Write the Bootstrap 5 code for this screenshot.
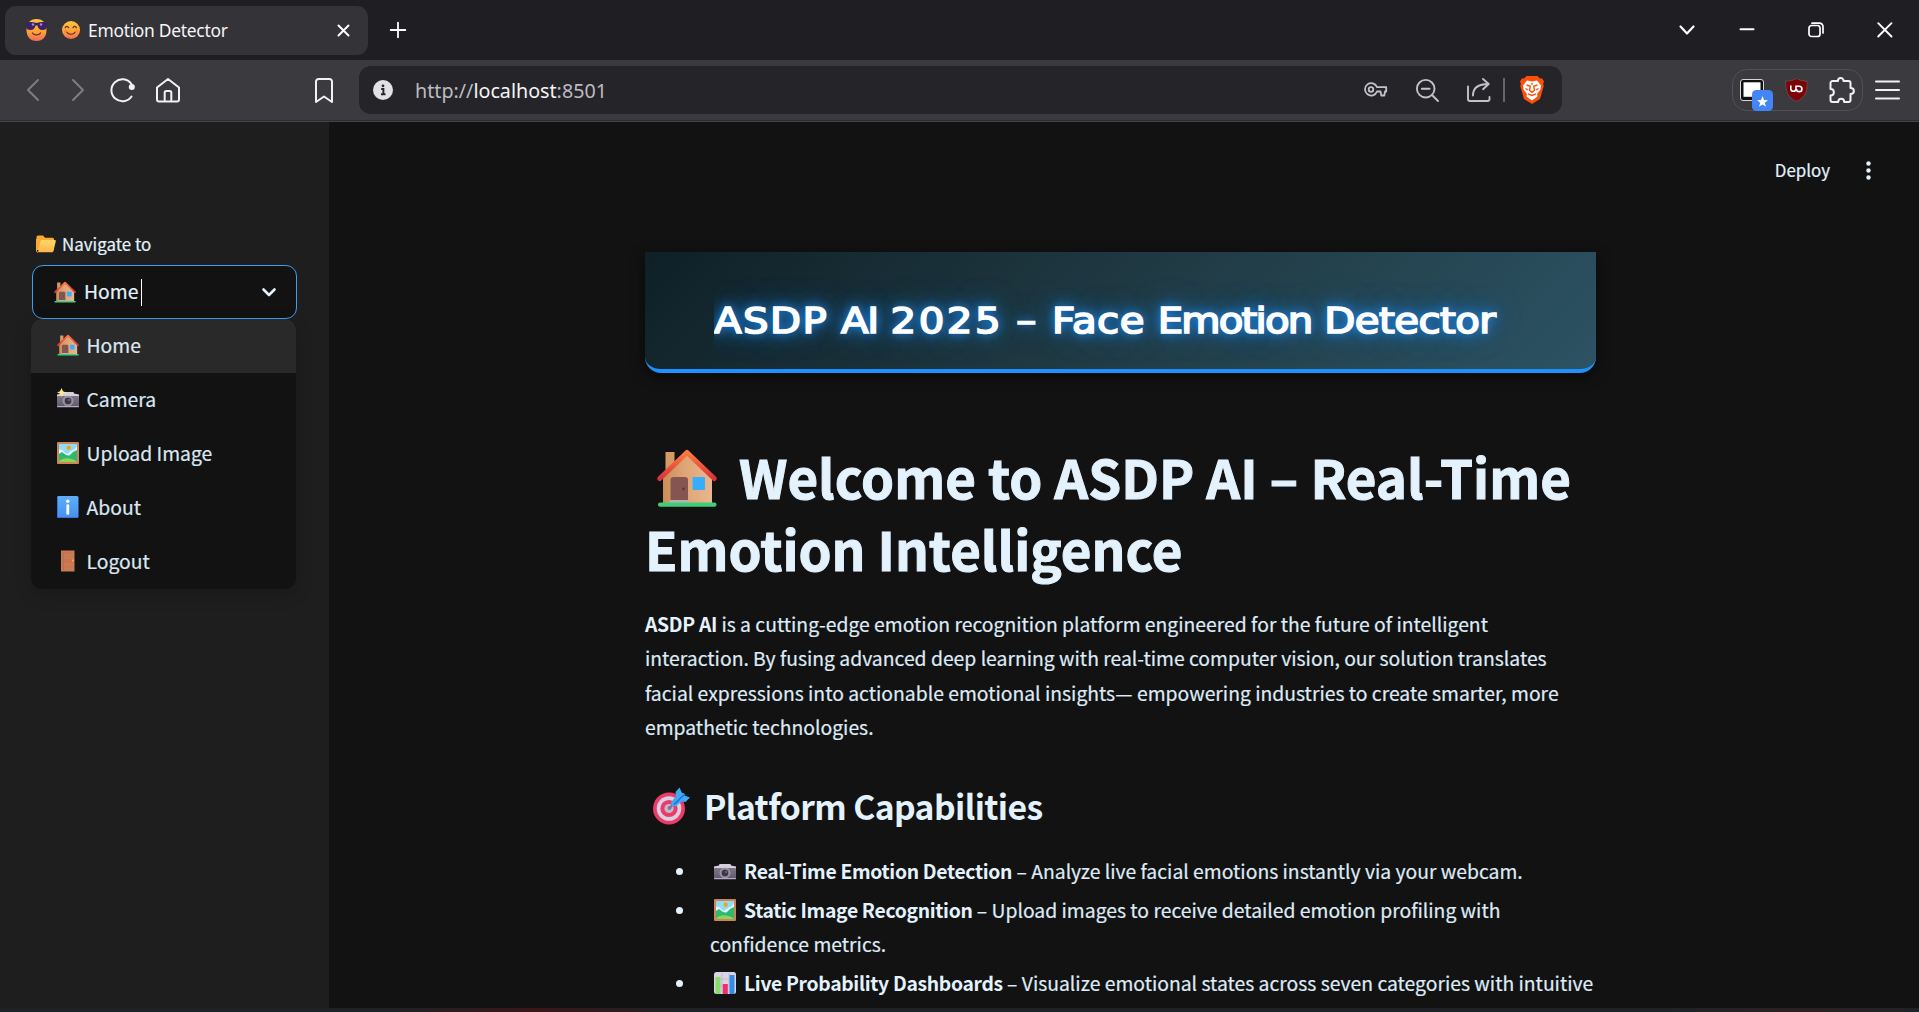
<!DOCTYPE html>
<html lang="en">
<head>
<meta charset="utf-8">
<title>😊 Emotion Detector</title>
<link href="https://cdn.jsdelivr.net/npm/bootstrap@5.3.0/dist/css/bootstrap.min.css" rel="stylesheet">
<style>
  body { background: #121212; color: #e3f2fd; font-family: "Noto Sans CJK SC", "Noto Sans", sans-serif; font-size: 19.34px; height: 1012px; overflow: hidden; }
  svg { flex: none; display: inline-block; overflow: visible; }
  .ln { fill: none; stroke: currentColor; stroke-linecap: round; stroke-linejoin: round; }
  .ui-font { font-family: "Noto Sans", "Open Sans", sans-serif; }

  .tabstrip { height: 60px; background: #1f1e23; color: #fff; padding: 0 26px 0 5px; }
  .tab-item { width: 363px; height: 49px; border-radius: 11px; background: #343338; padding: 0 18px 0 21px; }
  .tab-face { margin-left: 15px; }
  .tab-title { font-size: 17.4px; letter-spacing: -.27px; line-height: 24px; color: #f5f5f7; margin-left: 8px; padding-bottom: 1px; }
  .win-controls { gap: 53px; }
  .tab-search { margin-right: -9px; }
  .toolbar { height: 62px; background: #3b3a3f; border-bottom: 1px solid #45444a; box-shadow: inset 0 -1px #2c2b30; color: #f2f2f4; padding: 0 19px 1px 27px; }
  .nav-off { color: #7f7e84; }
  .nav-fwd { margin-left: 33px; }
  .nav-reload { margin-left: 26px; }
  .nav-home { margin-left: 21px; }
  .nav-mark { margin-left: 135px; }
  .url-box { width: 1203px; height: 48px; margin-left: 26px; border-radius: 12px; background: #252429; padding: 0 18px 0 14px; color: #c3c2c8; }
  .url-text { font-size: 19.7px; margin-left: 22px; padding-top: 1px; white-space: nowrap; color: #bcbbc2; }
  .url-text b { font-weight: 400; color: #f4f4f6; }
  .url-gap { margin-left: 28px; }
  .url-sep { width: 2px; height: 24px; background: #66656b; margin: 0 15px 0 13px; }
  .ext-box { width: 131px; height: 42px; border: 1.5px solid #525157; border-radius: 15px; margin: 0 12px 1px auto; padding: 0 7px; }
  .ext-pin { left: 12px; top: 11px; }
  .ext-shield { margin-left: 21px; }
  .ext-puzzle { margin-left: 21px; }

  .app-body { height: 886px; }
  .app-side { width: 329px; background: #1e1e1e; padding: 109px 32px 0 32px; }
  .side-label { font-size: 16.9px; height: 27px; padding: 0 0 2px 4px; gap: 6px; margin-bottom: 7px; }
  .pick { width: 265px; height: 54px; border: 1px solid #3d9df3; border-radius: 11px; background: #121212; padding: 0 20px 0 21px; }
  .pick-text { margin-left: 8px; }
  .caret { width: 1px; height: 27px; background: #fff; margin-left: 3px; }
  .pick-menu { width: 265px; margin-left: -1px; background: #121212; border-radius: 11px; overflow: hidden; box-shadow: 0 5px 18px rgba(0,0,0,.18); color: #dbe8f3; }
  .pick-menu > div { height: 54px; padding: 0 25px 0 26px; }
  .pick-menu > .sel { background: #292929; }
  .pick-menu svg { margin-bottom: 2px; }
  .pick-menu span { margin-left: 7.5px; }
  .app-side span, .body-text, .caps, .deploy span { -webkit-text-stroke: .2px currentColor; }

  .app-main { background: #121212; overflow: hidden; }
  .deploy { height: 130px; padding: 36px 45px 0 0; font-size: 16.9px; line-height: 24px; gap: 33px; }
  .deploy svg { margin-top: 2px; }
  .content { width: 951px; margin-left: 316px; }
  .hero { height: 121px; border-bottom: 4px solid #1e90ff; border-radius: 0 0 16px 16px; background: linear-gradient(135deg, #0f2027, #203a43 50%, #2c5364); box-shadow: 0 4px 14px rgba(0,0,0,.55); padding: 41px 0 0 69px; }
  .hero-title { font: 400 35.6px/56px "DejaVu Sans", sans-serif; color: #fff; white-space: nowrap; display: inline-block; transform: scaleX(1.132); transform-origin: 0 0; -webkit-text-stroke: 1.7px #fff; text-shadow: 0 0 9px #1e90ff, 0 0 16px #1e80e0, 0 0 26px #1e6cb8; clip-path: inset(-30px -40px -30px 0); }
  .w1 { letter-spacing: 1.3px; } .w2 { letter-spacing: -1.3px; } .w3 { letter-spacing: 2.3px; } .w4 { letter-spacing: 2.6px; }
  .w5 { letter-spacing: .4px; } .w6 { letter-spacing: -1.6px; } .w7 { letter-spacing: -.5px; }
  .big-title { font-size: 52.9px; font-weight: 700; line-height: 72px; margin: 67px 0 23px; white-space: nowrap; -webkit-text-stroke: 1px currentColor; }
  .big-title svg { margin: 0 22px 0 12px; vertical-align: -8px; }
  .body-text { line-height: 34.4px; margin-bottom: 40.8px; white-space: nowrap; color: #dfebf6; }
  .body-text b, .caps b { letter-spacing: -.32px; color: #e3f2fd; -webkit-text-stroke: 0; }
  .sub-title { font-size: 33.7px; font-weight: 700; letter-spacing: -.6px; line-height: 42px; margin-bottom: 26.6px; white-space: nowrap; }
  .sub-title svg { margin: 0 14px 0 7px; vertical-align: -5px; }
  .caps { line-height: 34.4px; padding-left: 65px; white-space: nowrap; color: #dfebf6; }
  .caps li { position: relative; margin-bottom: 4.6px; }
  .caps li::before { content: ""; position: absolute; left: -34px; top: 14px; width: 7px; height: 7px; border-radius: 50%; background: #e3f2fd; }
  .caps svg { margin: 0 8px 0 4px; vertical-align: -3px; }
  .desk-edge { height: 4px; background: radial-gradient(ellipse 150px 12px at 535px 3px, #3b1618, transparent), radial-gradient(ellipse 130px 12px at 1800px 3px, #2e2024, transparent), #1f2328; }
</style>
</head>
<body class="d-flex flex-column">

<svg width="0" height="0" class="position-absolute">
  <defs>
    <linearGradient id="gWall" x1="0" x2="1"><stop offset="0" stop-color="#c98e58"/><stop offset=".45" stop-color="#dfa577"/><stop offset="1" stop-color="#e8b78f"/></linearGradient>
    <linearGradient id="gRoof" x1="0" y1="0" x2="0" y2="1"><stop offset="0" stop-color="#ff7b3d"/><stop offset="1" stop-color="#d9333c"/></linearGradient>
    <linearGradient id="gFace" x1="0" y1="0" x2="0" y2="1"><stop offset="0" stop-color="#ffc53a"/><stop offset=".6" stop-color="#ffa033"/><stop offset="1" stop-color="#f4685a"/></linearGradient>
    <linearGradient id="gCam" x1="0" y1="0" x2="0" y2="1"><stop offset="0" stop-color="#7d7686"/><stop offset="1" stop-color="#605b6b"/></linearGradient>
    <linearGradient id="gFold" x1="0" y1="0" x2="0" y2="1"><stop offset="0" stop-color="#ffd866"/><stop offset="1" stop-color="#fdb54e"/></linearGradient>
    <linearGradient id="gInfo" x1="0" y1="0" x2="0" y2="1"><stop offset="0" stop-color="#5eaefc"/><stop offset="1" stop-color="#4590ee"/></linearGradient>
    <symbol id="house" viewBox="0 0 60 58">
      <path d="M8.500 3h9v18l-9 8z" fill="#d69a63"/>
      <path d="M6 54V27L30 6l25 21v27z" fill="url(#gWall)"/>
      <path d="M2.800 29.500 30 3.500l27.200 26" fill="none" stroke="url(#gRoof)" stroke-width="5" stroke-linecap="round" stroke-linejoin="round"/>
      <path d="M13.500 53V31a3 3 0 0 1 3-3H28a3 3 0 0 1 3 3v22z" fill="#84564f"/>
      <circle cx="26.500" cy="40" r="1.400" fill="#5d3a3a"/>
      <path d="M13 51h19l1 3H12z" fill="#b9b0b5"/>
      <rect x="35.500" y="28" width="12.500" height="13" rx="1" fill="#38aefb"/>
      <rect x="1" y="53.500" width="58.500" height="4.200" rx="2" fill="#3fce78"/>
    </symbol>
    <symbol id="camera" viewBox="0 0 22 22">
      <path d="M0 6.500 5 5.500 5.500 4h11l.5 1.500 5 1V9H0z" fill="#d6d0dd"/>
      <rect x="0" y="8" width="22" height="11" rx="1" fill="url(#gCam)"/>
      <rect x="0" y="18" width="22" height="1.300" rx=".6" fill="#b9a6cf"/>
      <circle cx="11" cy="13" r="5" fill="#8b8496" stroke="#aaa3b3" stroke-width=".8"/>
      <circle cx="11" cy="13" r="3.200" fill="#3c3547"/><circle cx="12" cy="12" r="1" fill="#75708a"/>
    </symbol>
    <symbol id="camflash" viewBox="0 0 22 22">
      <use href="#camera" width="22" height="22"/>
      <path d="M4.500 0 6 3.200 9 4.500 6 5.800 4.500 9 3 5.800 0 4.500 3 3.200z" fill="#ffe58a"/>
    </symbol>
    <symbol id="picture" viewBox="0 0 22 22">
      <rect width="22" height="22" rx="1" fill="#cf8455"/>
      <rect x="2" y="2" width="18" height="18" fill="#8fdcf8"/>
      <path d="M2 8c2-1 4 0 5 2l3 2 4-3 4-2 2-3v9H2z" fill="#e6f4fb"/>
      <circle cx="11.700" cy="5.800" r="2.200" fill="#f7a11b"/>
      <path d="M2 12l3-2 4 3 3 1 4-4 4-2v12H2z" fill="#2fb970"/>
      <path d="M2 20c2-5 13-5 18 0z" fill="#8ad65a"/>
    </symbol>
    <symbol id="info" viewBox="0 0 22 22">
      <rect width="21.500" height="22" rx="1.500" fill="url(#gInfo)"/><path d="M.5 2v19.500H21" fill="none" stroke="#3f6fd8"/>
      <circle cx="10.800" cy="5.200" r="1.700" fill="#fff"/><rect x="9.400" y="8.300" width="2.800" height="10.500" rx="1.200" fill="#fff"/>
    </symbol>
    <symbol id="door" viewBox="0 0 22 22">
      <rect x="4" y=".5" width="13.500" height="21" fill="#c67c57"/>
      <path d="M6.500 3h8.500M6.500 10h8.500M6.500 12h8.500M6.500 17h8.500" stroke="#d9694a" stroke-width="1.200"/>
      <path d="M6.200 2.500v18" stroke="#b06a4a" stroke-width=".8"/><circle cx="16" cy="10.500" r="1.100" fill="#f6b02e"/>
    </symbol>
    <symbol id="folder" viewBox="0 0 20 18">
      <path d="M.5 2a1.500 1.500 0 0 1 1.500-1.500h5l2 2.300h7.500A1.500 1.500 0 0 1 18 4.300V15H.5z" fill="#f5ab35"/>
      <path d="M4.500 6.200A1.500 1.500 0 0 1 6 5h12.800c.7 0 1.200.6 1 1.300l-2.300 9.800a1.500 1.500 0 0 1-1.500 1.200H2z" fill="url(#gFold)"/>
      <path d="M.5 4v12c0 .8.800 1.400 1.500 1.400" stroke="#f5ab35" fill="none"/>
    </symbol>
    <symbol id="target" viewBox="0 0 38 38">
      <circle cx="17" cy="21.500" r="16" fill="#ee3a68"/><circle cx="17" cy="21.500" r="12.300" fill="#d9cfe2"/>
      <circle cx="17" cy="21.500" r="8.600" fill="#ee3a68"/><circle cx="17" cy="21.500" r="4.600" fill="#c3b9cf"/><circle cx="17.500" cy="21" r="2" fill="#837a94"/>
      <path d="M17.500 21 28 10" stroke="#6d7891" stroke-width="2"/>
      <path d="M19 15.500 24 9l-.5-4L27.500.5 30 6l2 .2.500 2.300 5.500 2-4.500 4.500-3.700-.5-5.800 4.500-4 .5z" fill="#3ea9f2"/>
      <path d="M22 17.500 33 7" stroke="#1f6fd6" stroke-width="1.600"/>
    </symbol>
    <symbol id="chart" viewBox="0 0 22 22">
      <rect width="22" height="22" rx="2.500" fill="#dcd3e4"/>
      <path d="M1 7h20M1 14h20M8 1v20M15 1v20" stroke="#bcb2c6" stroke-width=".7"/>
      <rect x="1.500" y="5" width="5" height="17" fill="#86dd6c"/><rect x="8.800" y="12" width="5" height="10" fill="#f02e6c"/><rect x="15.500" y="3" width="5" height="19" fill="#2f8fe8"/>
    </symbol>
    <symbol id="smile" viewBox="0 0 18 18">
      <circle cx="9" cy="9" r="9" fill="url(#gFace)"/>
      <path d="M3.200 6.800c.6-1.800 2.800-1.800 3.400 0M11 6.800c.6-1.800 2.800-1.800 3.400 0M4.800 11c1.500 3 7 3 8.400 0" fill="none" stroke="#5b3035" stroke-width="1.200" stroke-linecap="round"/>
      <circle cx="3.500" cy="10" r="1.500" fill="#ff7a45" opacity=".7"/><circle cx="14.500" cy="10" r="1.500" fill="#ff7a45" opacity=".7"/>
    </symbol>
    <symbol id="cool" viewBox="0 0 21 22">
      <path d="M10.500 0C17 0 20.500 4.500 20.500 11s-3.500 11-10 11S.5 17.500.5 11 4 0 10.500 0z" fill="url(#gFace)"/>
      <path d="M0 3.500c3-1 7-.7 10.500.5C14 2.800 18 2.500 21 3.500v3c0 3-1.500 4.500-4.500 4.500S12 9 11.500 6.500h-2C9 9 7.500 11 4.500 11S0 9.500 0 6.500z" fill="#3a2169"/>
      <circle cx="7" cy="5.500" r="1.200" fill="#a78bdf"/><circle cx="15" cy="5.500" r="1.200" fill="#a78bdf"/>
      <path d="M6.500 14c1.500 2.500 6.500 2.500 8 0" fill="none" stroke="#5b3035" stroke-width="1.400" stroke-linecap="round"/>
    </symbol>
  </defs>
</svg>

<header class="ui-font">
  <div class="tabstrip d-flex align-items-center">
    <div class="tab-item d-flex align-items-center">
      <svg width="21" height="22"><use href="#cool"/></svg>
      <svg class="tab-face" width="18" height="18"><use href="#smile"/></svg>
      <span class="tab-title">Emotion Detector</span>
      <svg class="ln ms-auto" width="13" height="13" viewBox="0 0 13 13" stroke-width="2"><path d="m1.500 1.500 10 10m0-10-10 10"/></svg>
    </div>
    <svg class="ln ms-4" width="14" height="16" viewBox="1 0 14 16" stroke-width="1.800"><path d="M7 .7v14.600M-.3 8h14.600"/></svg>
    <div class="win-controls d-flex align-items-center ms-auto">
      <svg class="ln tab-search" width="16" height="16" viewBox="0 0 16 16" stroke-width="2.200"><path d="m1.500 4.500 6.500 7 6.500-7"/></svg>
      <svg class="ln" width="16" height="16" viewBox="0 0 16 16" stroke-width="2"><path d="M1.500 7.200h13"/></svg>
      <svg class="ln" width="16" height="16" viewBox="0 0 16 16" stroke-width="1.700"><rect x="1" y="3.500" width="11" height="11" rx="2.500"/><path d="M4 1.200h7.500a3.500 3.500 0 0 1 3.500 3.500V11"/></svg>
      <svg class="ln" width="16" height="16" viewBox="0 0 16 16" stroke-width="1.900"><path d="m1.200 1.200 13.300 13.300m0-13.300L1.200 14.500"/></svg>
    </div>
  </div>

  <div class="toolbar d-flex align-items-center">
    <svg class="ln nav-off" width="12" height="22" viewBox="0 0 12 22" stroke-width="1.900"><path d="M11 1 1 11l10 10"/></svg>
    <svg class="ln nav-off nav-fwd" width="12" height="22" viewBox="0 0 12 22" stroke-width="1.900"><path d="m1 1 10 10L1 21"/></svg>
    <svg class="ln nav-reload" width="25" height="24" viewBox="0 0 25 24" stroke-width="2"><path d="M21.500 18.500A11 11 0 1 1 21.300 5.800"/><circle cx="21.800" cy="9" r="2.300" fill="currentColor" stroke-width="1.500"/></svg>
    <svg class="ln nav-home" width="24" height="25" viewBox="0 0 24 25" stroke-width="2"><path d="M1 9.500 12 1l11 8.500v12a2 2 0 0 1-2 2H3a2 2 0 0 1-2-2zM8.700 23v-8.500a1.500 1.500 0 0 1 1.500-1.500h3.600a1.500 1.500 0 0 1 1.500 1.500V23"/></svg>
    <svg class="ln nav-mark" width="18" height="25" viewBox="0 0 18 25" stroke-width="2"><path d="M1 3.500A2.500 2.500 0 0 1 3.500 1h11A2.500 2.500 0 0 1 17 3.500V24l-8-5.500L1 24z"/></svg>

    <div class="url-box d-flex align-items-center">
      <svg width="20" height="20" viewBox="0 0 20 20"><circle cx="10" cy="10" r="10" fill="#e2e1e6"/><circle cx="10" cy="5.800" r="1.400" fill="#252429"/><path d="M8.200 9h2.200v5.300M8 14.300h4.500" stroke="#252429" stroke-width="1.900" fill="none"/></svg>
      <span class="url-text">http://<b>localhost</b>:8501</span>
      <svg class="ln ms-auto" width="24" height="16" viewBox="0 0 24 16" stroke-width="1.800"><path d="M13 5.200h9.200v4.300h-1.200l-.7 4h-3l-.8-4H13a6.200 6.200 0 1 1 0-4.300z"/><circle cx="7" cy="7.500" r="2.300"/></svg>
      <svg class="ln url-gap" width="23" height="23" viewBox="0 0 23 23" stroke-width="1.900"><circle cx="9.700" cy="9.700" r="8.800"/><path d="m16 16 6 6M5.800 9.700h7.800"/></svg>
      <svg class="ln url-gap" width="23" height="24" viewBox="0 0 23 24" stroke-width="1.900"><path d="M1 8.500V21a2 2 0 0 0 2 2h17.500a2 2 0 0 0 2-2v-2M6 17.500C6 10 11 6 21.500 6M16 1l5.700 5-5.700 5.200"/></svg>
      <span class="url-sep"></span>
      <svg width="24" height="28" viewBox="0 0 24 28"><path d="M6.500 0h11l2.500 2.500 2-.3L24 5.500l-.8 2.500.5 2L20 23l-8 5-8-5L.3 10l.5-2L0 5.500l2-3.300 2 .3z" fill="#fb4f0b"/><path d="m7 4.500 5 1 5-1 4 5-.5 4-3.500 4.500.5 2.500-5.500 4-5.500-4L7 18l-3.500-4.500-.5-4z" fill="#fff"/><path d="m6.500 9 3.800 1.300-.8 4 2.500 2 2.500-2-.8-4L17.500 9M5.500 12.500 8 14M18.500 12.500 16 14M8 17.800l4 1.700 4-1.700M12 7v2" fill="none" stroke="#fb4f0b" stroke-width="1.400"/></svg>
    </div>

    <div class="ext-box d-flex align-items-center">
      <span class="position-relative d-flex">
        <svg width="24" height="22" viewBox="0 0 24 22"><rect x=".5" y=".5" width="23" height="21" rx="2.500" fill="#111" stroke="#d5d5d8"/><rect x="3.500" y="3.300" width="17" height="14.500" fill="#fff"/></svg>
        <svg class="position-absolute ext-pin" width="21" height="21" viewBox="0 0 21 21"><rect width="21" height="21" rx="4.500" fill="#4285f4"/><path d="m10.500 6 1.500 4 4 .2-3.200 2.500 1.200 4-3.500-2.300L7 16.700l1.200-4L5 10.200 9 10z" fill="#fff"/></svg>
      </span>
      <svg class="ext-shield" width="23" height="24" viewBox="0 0 23 24"><path d="M11.500.3C14 2.300 18 3 22.200 3.200c.4 9-1.200 15.800-10.700 20.300C2 19 .4 12.200.8 3.200 5 3 9 2.300 11.500.3z" fill="#7c0407" stroke="#6a5054" stroke-width=".8"/><path d="M5.800 7.500v3.200a2.600 2.600 0 0 0 5.200 0V8.200h3.200a2.700 2.700 0 1 1-2.700 2.700" fill="none" stroke="#fff" stroke-width="1.600"/></svg>
      <svg class="ln ext-puzzle" width="26" height="26" viewBox="0 0 26 26" stroke-width="2"><path d="M3.500 4H9C8.500 0 14.500-.3 14.500 4h5a2 2 0 0 1 2 2v5c4.500 0 4.500 6 0 6v6a2 2 0 0 1-2 2h-4.300c0-4.500-6-4.500-6 0H3.500a2 2 0 0 1-2-2v-4.500c4.500 0 4.500-6.500 0-6.500V6a2 2 0 0 1 2-2z"/></svg>
    </div>
    <svg class="ln" width="25" height="20" viewBox="0 0 25 20" stroke-width="2"><path d="M1 1.500h23M1 10h23M1 18.500h23"/></svg>
  </div>
</header>

<div class="app-body d-flex">
  <aside class="app-side">
    <div class="side-label d-flex align-items-center"><svg width="20" height="18"><use href="#folder"/></svg><span>Navigate to</span></div>
    <div class="pick d-flex align-items-center">
      <svg width="22" height="22"><use href="#house"/></svg><span class="pick-text">Home</span><i class="caret"></i>
      <svg class="ln ms-auto" width="14" height="9" viewBox="0 0 14 9" stroke-width="2.600"><path d="m1.500 1.500 5.500 5.500 5.500-5.500"/></svg>
    </div>
    <div class="pick-menu">
      <div class="sel d-flex align-items-center"><svg width="22" height="22"><use href="#house"/></svg><span>Home</span></div>
      <div class="d-flex align-items-center"><svg width="22" height="22"><use href="#camflash"/></svg><span>Camera</span></div>
      <div class="d-flex align-items-center"><svg width="22" height="22"><use href="#picture"/></svg><span>Upload Image</span></div>
      <div class="d-flex align-items-center"><svg width="22" height="22"><use href="#info"/></svg><span>About</span></div>
      <div class="d-flex align-items-center"><svg width="22" height="22"><use href="#door"/></svg><span>Logout</span></div>
    </div>
  </aside>

  <main class="app-main flex-grow-1">
    <div class="deploy d-flex justify-content-end align-items-start">
      <span>Deploy</span>
      <svg width="11" height="20" viewBox="0 0 11 20" fill="#e3f2fd"><circle cx="5.500" cy="3.500" r="2.200"/><circle cx="5.500" cy="10.500" r="2.200"/><circle cx="5.500" cy="17.500" r="2.200"/></svg>
    </div>
    <div class="content">
      <div class="hero"><div class="hero-title"><span class="w1">ASDP</span> <span class="w2">AI</span> <span class="w3">2025</span> <span class="w4">–</span> <span class="w5">Face</span> <span class="w6">Emotion</span> <span class="w7">Detector</span></div></div>
      <h1 class="big-title"><svg width="60" height="58"><use href="#house"/></svg>Welcome to ASDP AI – Real-Time<br>Emotion Intelligence</h1>
      <p class="body-text"><b>ASDP AI</b> is a cutting-edge emotion recognition platform engineered for the future of intelligent<br>interaction. By fusing advanced deep learning with real-time computer vision, our solution translates<br>facial expressions into actionable emotional insights— empowering industries to create smarter, more<br>empathetic technologies.</p>
      <h2 class="sub-title"><svg width="38" height="38"><use href="#target"/></svg>Platform Capabilities</h2>
      <ul class="caps list-unstyled">
        <li><svg width="22" height="22"><use href="#camera"/></svg><b>Real-Time Emotion Detection</b> – Analyze live facial emotions instantly via your webcam.</li>
        <li><svg width="22" height="22"><use href="#picture"/></svg><b>Static Image Recognition</b> – Upload images to receive detailed emotion profiling with<br>confidence metrics.</li>
        <li><svg width="22" height="22"><use href="#chart"/></svg><b>Live Probability Dashboards</b> – Visualize emotional states across seven categories with intuitive</li>
      </ul>
    </div>
  </main>
</div>
<div class="desk-edge"></div>

<script src="https://cdn.jsdelivr.net/npm/bootstrap@5.3.0/dist/js/bootstrap.bundle.min.js"></script>
</body>
</html>
